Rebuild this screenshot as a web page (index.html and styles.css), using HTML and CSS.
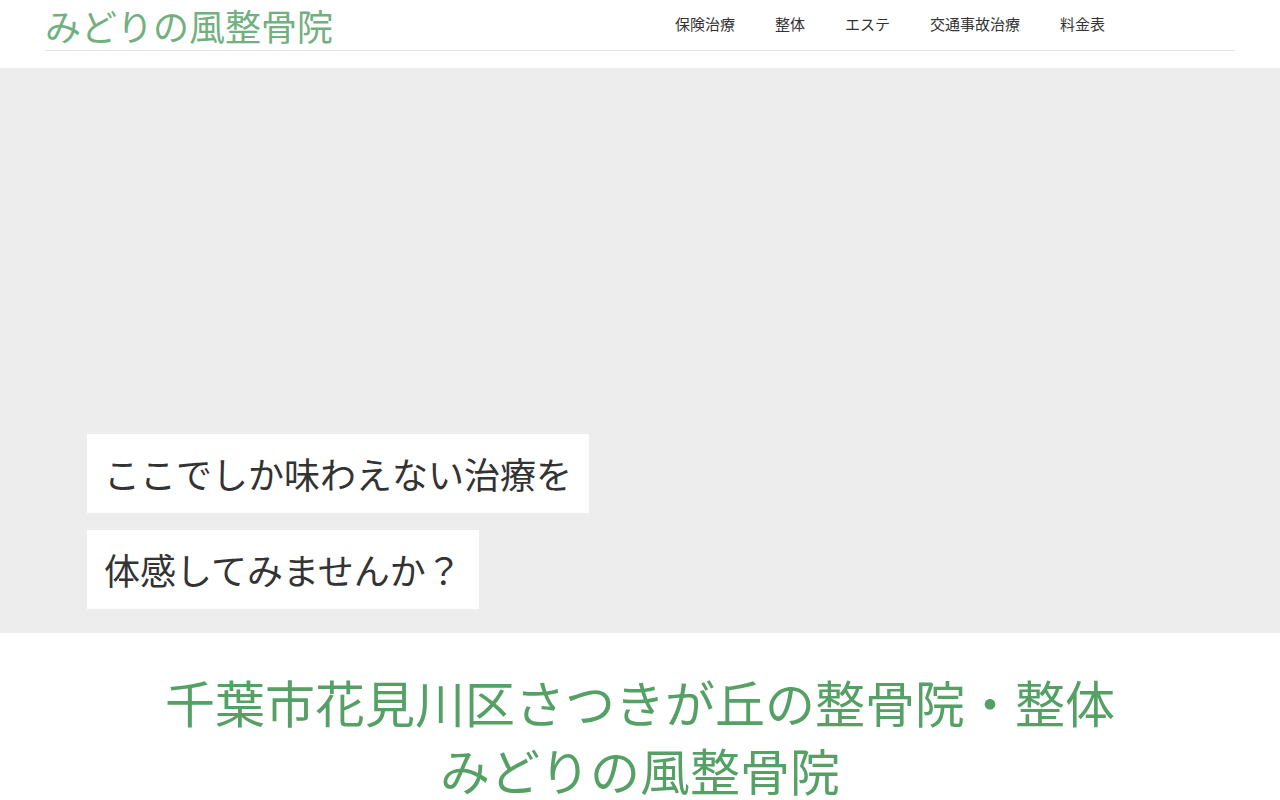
FILE: index.html
```html
<!DOCTYPE html>
<html lang="ja">
<head>
    <meta charset="UTF-8">
    <meta name="viewport" content="width=device-width, initial-scale=1.0">
    <title>みどりの風整骨院</title>
    <link rel="stylesheet" href="styles.css">
</head>
<body>
    <header class="site-header">
        <div class="header-inner">
            <a class="logo" href="#">みどりの風整骨院</a>
            <nav class="main-nav">
                <a href="#">保険治療</a>
                <a href="#">整体</a>
                <a href="#">エステ</a>
                <a href="#">交通事故治療</a>
                <a href="#">料金表</a>
            </nav>
        </div>
    </header>

    <section class="hero">
        <div class="hero-copy">
            <p class="hero-line">ここでしか味わえない治療を</p>
            <p class="hero-line">体感してみませんか？</p>
        </div>
    </section>

    <section class="intro">
        <h1>千葉市花見川区さつきが丘の整骨院・整体<br>みどりの風整骨院</h1>
    </section>
</body>
</html>
```

FILE: styles.css
```css
body {
    font-family: "Noto Sans CJK JP", "Noto Sans", sans-serif;
    background-color: #fff;
    color: #333;
    margin: 0;
    padding: 0;
}

a {
    text-decoration: none;
}

.site-header {
    background-color: #fff;
    padding-bottom: 17px;
}

.header-inner {
    margin: 0 45px;
    height: 51px;
    border-bottom: 1px solid #e6e6e6;
    display: flex;
    align-items: flex-start;
    justify-content: space-between;
    box-sizing: border-box;
}

.logo {
    font-size: 36px;
    line-height: 50px;
    color: #72b080;
}

.main-nav {
    display: flex;
    margin-right: 110px;
}

.main-nav a {
    font-size: 15px;
    line-height: 48px;
    color: #333;
    padding: 0 20px;
}

.hero {
    background-color: #ededed;
    height: 565px;
    display: flex;
    align-items: flex-end;
}

.hero-copy {
    display: flex;
    flex-direction: column;
    align-items: flex-start;
    gap: 17px;
    margin: 0 0 24px 87px;
}

.hero-line {
    margin: 0;
    background-color: #fff;
    font-size: 36px;
    line-height: 79px;
    padding: 0 17px 0 17px;
    color: #333;
}

.intro {
    padding-top: 34px;
    text-align: center;
}

.intro h1 {
    margin: 0;
    font-size: 50px;
    font-weight: normal;
    line-height: 68px;
    color: #55a065;
}
```
